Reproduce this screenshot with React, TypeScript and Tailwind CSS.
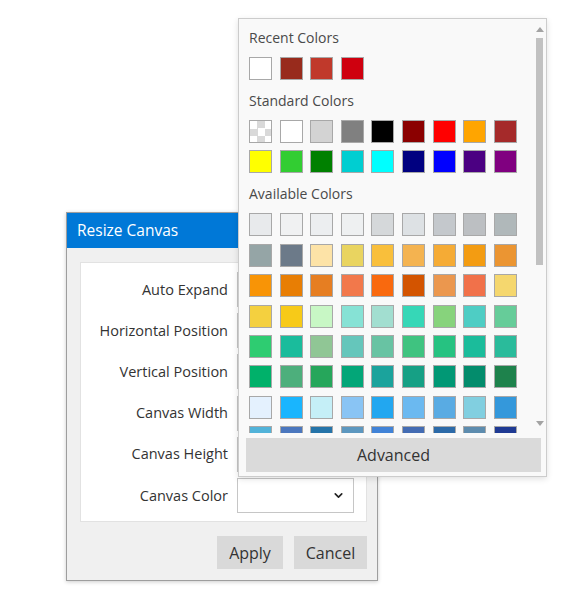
import React from "react";
import { ChevronDown } from "lucide-react";

const recent = ["#ffffff", "#982b1c", "#c0392b", "#cf000f"];

const standard = [
  "transparent", "#ffffff", "#d3d3d3", "#808080", "#000000", "#8b0000", "#ff0000", "#ffa500", "#a52a2a",
  "#ffff00", "#32cd32", "#008000", "#00ced1", "#00ffff", "#000080", "#0000ff", "#4b0082", "#800080",
];

const available = [
  "#e8eaec", "#f0f1f2", "#eceef0", "#eef0f1", "#d5d8da", "#dde1e4", "#c4c8cc", "#bcbfc2", "#b0b8ba",
  "#95a5a6", "#6c7a89", "#fde3a7", "#e9d460", "#f9bf3b", "#f4b350", "#f5ab35", "#f39c12", "#eb9532",
  "#f89406", "#e87e04", "#e67e22", "#f2784b", "#f9690e", "#d35400", "#eb974e", "#f1714a", "#f5d76e",
  "#f4d03f", "#f7ca18", "#c8f7c5", "#86e2d5", "#a2ded0", "#36d7b7", "#87d37c", "#4ecdc4", "#66cc99",
  "#2ecc71", "#1abc9c", "#90c695", "#65c6bb", "#68c3a3", "#3fc380", "#26c281", "#1bbc9b", "#2abb9b",
  "#00b16a", "#4daf7c", "#26a65b", "#03a678", "#1ba39c", "#16a085", "#019875", "#038c6c", "#1e824c",
  "#e4f1fe", "#19b5fe", "#c5eff7", "#89c4f4", "#22a7f0", "#6bb9f0", "#59abe3", "#81cfe0", "#3498db",
  "#52b3d9", "#4b77be", "#2574a9", "#5c97bf", "#4183d7", "#446cb3", "#2c6aa8", "#5d8cae", "#1f3a93",
];

const font = { fontFamily: '"Open Sans", "Noto Sans", sans-serif' };

function Swatch({ color }: { color: string }) {
  if (color === "transparent") {
    return (
      <div className="w-[23px] h-[23px] border border-[#a8a8a8] bg-white bg-[image:conic-gradient(#d9d9d9_25%,#ffffff_0_50%,#d9d9d9_0_75%,#ffffff_0)] bg-size-[15px_15px]" />
    );
  }
  return <div className="w-[23px] h-[23px] border border-[#a8a8a8]" style={{ background: color }} />;
}

function Section({ title, colors, first }: { title: string; colors: string[]; first?: boolean }) {
  return (
    <div className={first ? "" : "mt-[11px]"}>
      <div className="h-5 leading-5 text-[14px] text-[#4a4a4a]">{title}</div>
      <div className="mt-[9px] grid grid-cols-[repeat(9,23px)] gap-x-[7.6px] gap-y-[7.4px]">
        {colors.map((c, i) => (
          <Swatch key={i} color={c} />
        ))}
      </div>
    </div>
  );
}

function ColorPopup() {
  return (
    <div className="absolute left-[238px] top-[18px] w-[309px] h-[459px] border border-[#cccccc] bg-[#f9f9f9] shadow-[0_2px_6px_rgba(0,0,0,0.12)] flex flex-col">
      <div className="h-[414px] flex">
        <div className="flex-1 overflow-hidden pl-[10px] pt-[9px]">
          <Section title="Recent Colors" colors={recent} first />
          <Section title="Standard Colors" colors={standard} />
          <Section title="Available Colors" colors={available} />
        </div>
        <div className="w-[11px] mr-px flex flex-col items-center pt-[8px] pb-[7px]">
          <div className="w-0 h-0 border-l-[4px] border-r-[4px] border-b-[5px] border-l-transparent border-r-transparent border-b-[#a3a3a3]" />
          <div className="mt-[6px] w-[7px] h-[227px] bg-[#c1c1c1]" />
          <div className="flex-1" />
          <div className="w-0 h-0 border-l-[4px] border-r-[4px] border-t-[5px] border-l-transparent border-r-transparent border-t-[#a3a3a3]" />
        </div>
      </div>
      <div className="mx-[7px] mr-[5px] mt-[5px] h-[34px] bg-[#dadada] flex items-center justify-center text-[16px] text-[#333333]">
        Advanced
      </div>
    </div>
  );
}

const rows = [
  "Auto Expand",
  "Horizontal Position",
  "Vertical Position",
  "Canvas Width",
  "Canvas Height",
  "Canvas Color",
];

function ResizeDialog() {
  return (
    <div className="w-[312px] h-[369px] border border-[#9e9e9e] bg-[#f0f0f0] shadow-[0_1px_4px_rgba(0,0,0,0.2)] flex flex-col">
      <div className="h-[35px] bg-[#0078d7] text-white text-[15.5px] pl-[10px] flex items-center">Resize Canvas</div>
      <div className="pl-[13px] pr-[10px] pt-[14px] flex flex-col">
        <div className="h-[260px] border border-[#e2e2e2] bg-white pt-[9px] pb-[8px] pr-[12px] grid grid-cols-[147px_117px] gap-x-[9px] gap-y-[6.2px] content-start">
          {rows.map((r) => (
            <React.Fragment key={r}>
              <div className="h-[35px] flex items-center justify-end text-[14.5px] text-[#333333]">{r}</div>
              <div className="h-[35px] border border-[#c6c6c6] bg-white flex items-center justify-end pr-[8px]">
                {r === "Canvas Color" && <ChevronDown size={13} strokeWidth={3} color="#222" />}
              </div>
            </React.Fragment>
          ))}
        </div>
        <div className="mt-[14px] flex justify-end gap-[11px]">
          <div className="w-[66px] h-[33px] bg-[#d9d9d9] flex items-center justify-center text-[16px] text-[#333333]">Apply</div>
          <div className="w-[73px] h-[33px] bg-[#d9d9d9] flex items-center justify-center text-[16px] text-[#333333]">Cancel</div>
        </div>
      </div>
    </div>
  );
}

export default function App() {
  return (
    <div className="relative w-[571px] h-[589px] bg-white overflow-hidden" style={font}>
      <div className="pl-[66px] pt-[212px]">
        <ResizeDialog />
      </div>
      <ColorPopup />
    </div>
  );
}
